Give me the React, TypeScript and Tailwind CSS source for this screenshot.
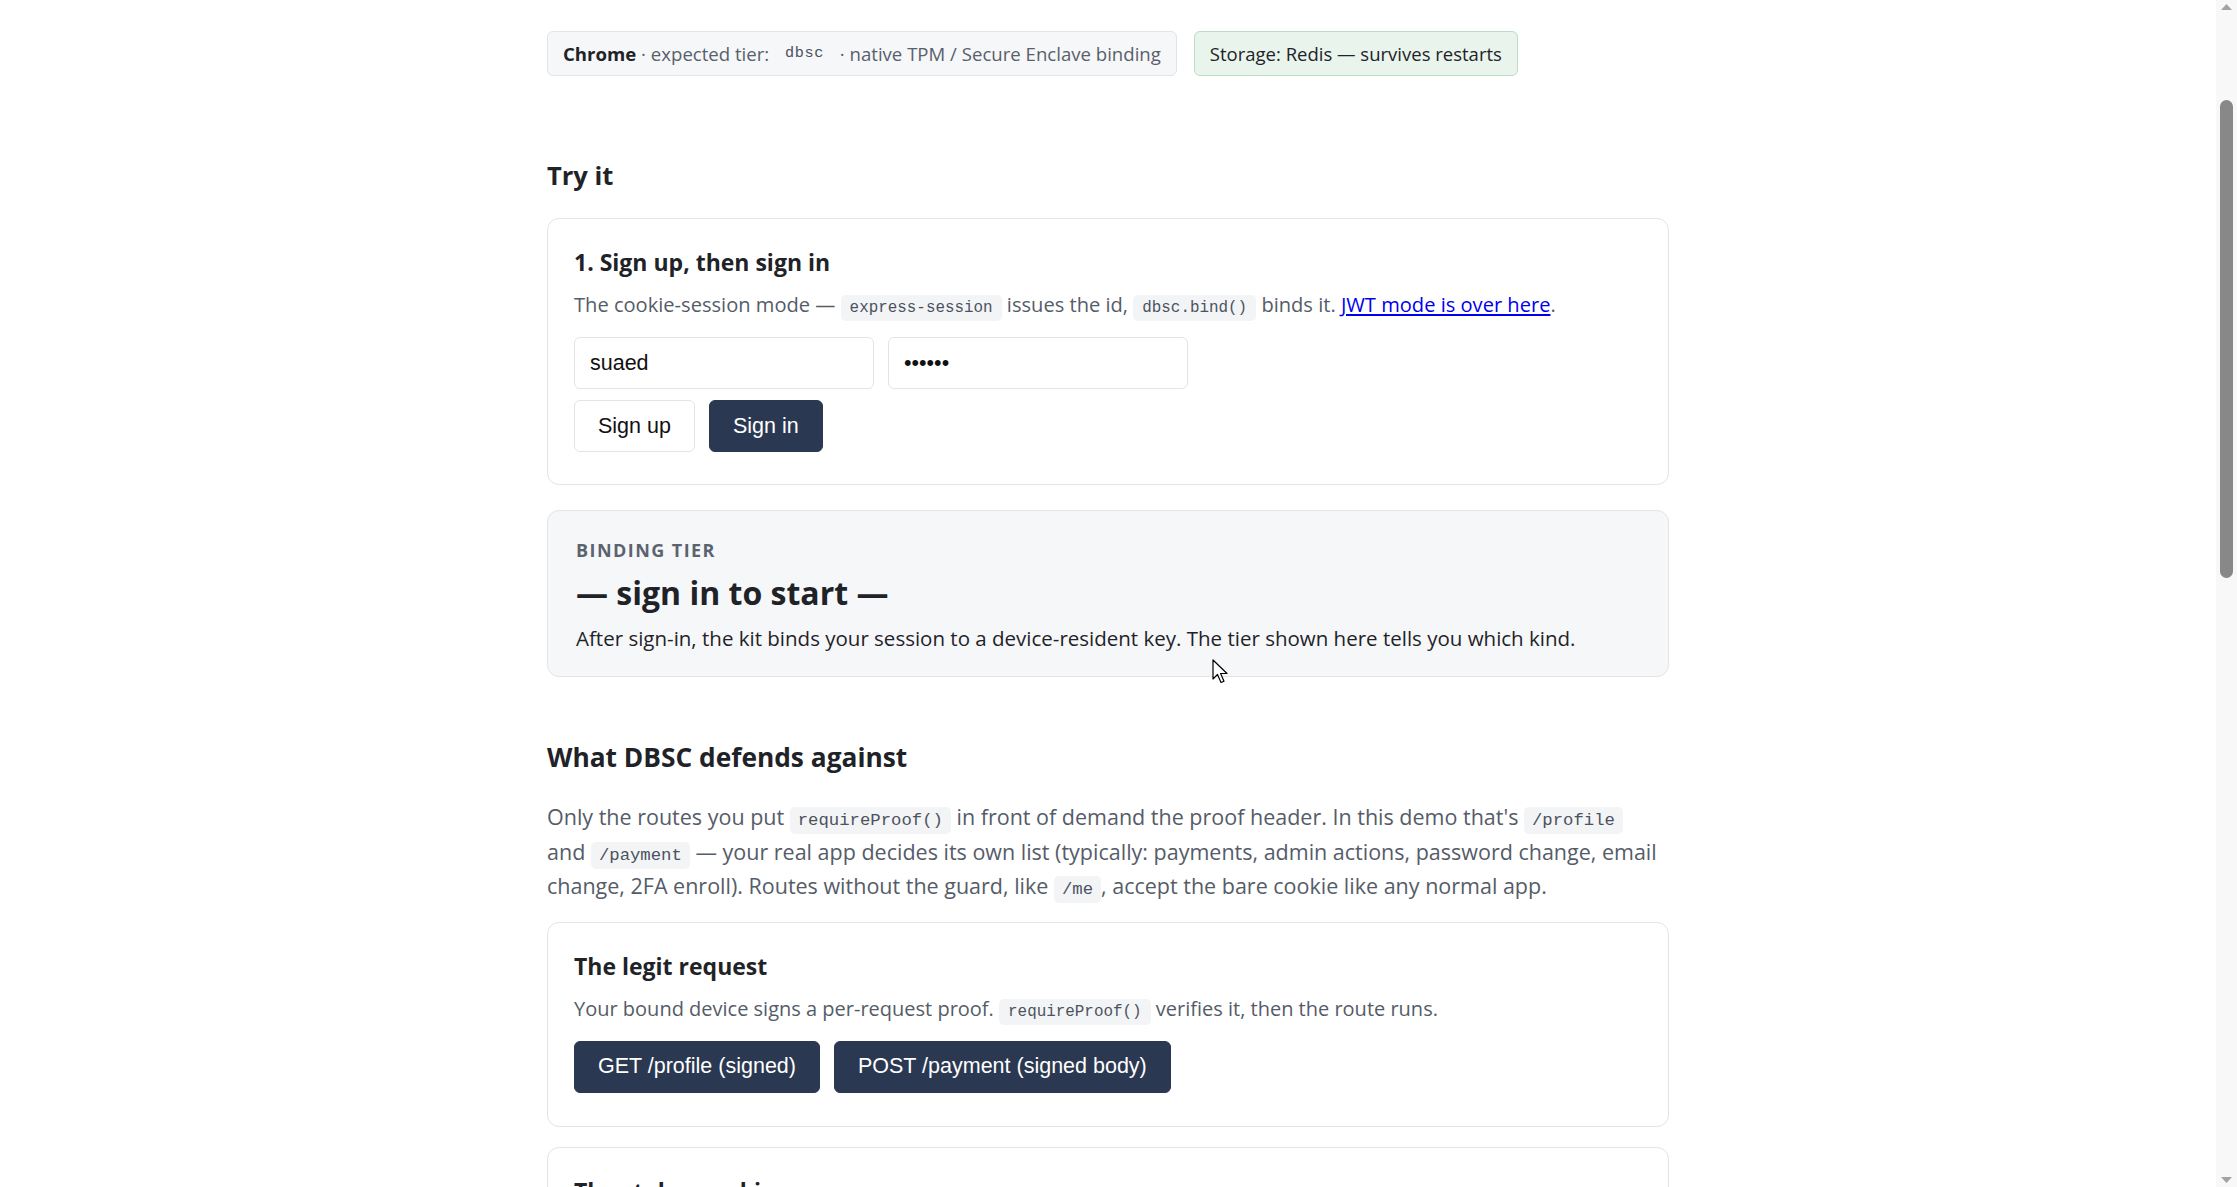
import type { ReactNode } from 'react'

const sans = { fontFamily: '"Open Sans", "Noto Sans", sans-serif' }
const arial = { fontFamily: '"Liberation Sans", Arial, sans-serif' }
const mono = { fontFamily: '"Liberation Mono", "DejaVu Sans Mono", monospace' }

function Code({ children, size = 'md' }: { children: ReactNode; size?: 'sm' | 'md' | 'lg' }) {
  const cls =
    size === 'sm'
      ? 'px-[11px] text-[15.2px] tracking-[0.04em]'
      : size === 'lg'
        ? 'px-[8px] py-[4px] bg-[#f3f4f6] text-[17.3px]'
        : 'px-[9px] py-[4px] bg-[#f3f4f6] text-[15.9px]'
  return (
    <code className={`rounded-[5px] leading-none text-[#4b5260] ${cls}`} style={mono}>
      {children}
    </code>
  )
}

function Card({ children, muted = false, className = '' }: { children: ReactNode; muted?: boolean; className?: string }) {
  return (
    <section
      className={`rounded-[12px] border border-[#e2e4e9] px-[26px] ${muted ? 'bg-[#f6f7f9]' : 'bg-white'} ${className}`}
    >
      {children}
    </section>
  )
}

function Button({ children, dark = false }: { children: ReactNode; dark?: boolean }) {
  return (
    <button
      className={`h-[52px] rounded-[6px] border px-[23px] text-[21.5px] ${
        dark ? 'border-[#2b3852] bg-[#2b3852] text-white' : 'border-[#e2e4e9] bg-white text-[#111]'
      }`}
      style={arial}
    >
      {children}
    </button>
  )
}

export default function App() {
  return (
    <div className="flex h-screen overflow-hidden bg-white" style={sans}>
      <main className="relative flex-1 overflow-hidden">
        <div className="mx-auto w-[1122px] pt-[31px]">
          {/* Environment badges */}
          <div className="flex gap-[17px]">
            <div className="flex h-[45px] items-center whitespace-pre rounded-[6px] border border-[#e1e4e8] bg-[#f6f7f9] px-[15px] text-[18.6px] text-[#59606b]">
              <b className="font-bold text-[#1f2328]">Chrome</b> · expected tier: <Code size="sm">dbsc</Code> · native TPM / Secure Enclave binding
            </div>
            <div className="flex h-[45px] items-center rounded-[6px] border border-[#bcdcc5] bg-[#e8f4ec] px-[15px] text-[18.5px] text-[#1f2328]">
              Storage: Redis — survives restarts
            </div>
          </div>

          <h2 className="mt-[82px] text-[25.5px] font-bold leading-[35px] text-[#1f2328]">Try it</h2>

          {/* Sign in card */}
          <Card className="mt-[25px] pt-[28px] pb-[32px]">
            <h3 className="text-[23px] font-bold leading-[31px] text-[#1f2328]">1. Sign up, then sign in</h3>
            <p className="mt-[10px] text-[20.1px] leading-[34px] text-[#555c68]">
              The cookie-session mode — <Code>express-session</Code> issues the id, <Code>dbsc.bind()</Code> binds it.{' '}
              <a href="#" className="text-[#0000ee] underline">
                JWT mode is over here
              </a>
              .
            </p>
            <div className="mt-[15px] flex gap-[14px]">
              <input
                readOnly
                defaultValue="suaed"
                className="h-[52px] w-[300px] rounded-[6px] border border-[#e2e4e9] bg-white px-[15px] text-[21.5px] text-[#111] outline-none"
                style={arial}
              />
              <input
                readOnly
                type="password"
                defaultValue="secret"
                className="h-[52px] w-[300px] rounded-[6px] border border-[#e2e4e9] bg-white px-[15px] text-[21.5px] text-[#111] outline-none"
                style={arial}
              />
            </div>
            <div className="mt-[11px] flex gap-[14px]">
              <Button>Sign up</Button>
              <Button dark>Sign in</Button>
            </div>
          </Card>

          {/* Binding tier */}
          <Card muted className="mt-[25px] px-[28px] pt-[28px] pb-[23px]">
            <div className="text-[18px] font-bold uppercase leading-[22px] tracking-[0.08em] text-[#5c6370]">Binding tier</div>
            <div className="mt-[12px] text-[32px] font-bold leading-[40px] text-[#1f2328]">— sign in to start —</div>
            <p className="mt-[10px] text-[20.5px] leading-[30px] text-[#1f2328]">
              After sign-in, the kit binds your session to a device-resident key. The tier shown here tells you which kind.
            </p>
          </Card>

          <h2 className="mt-[63px] text-[26.3px] font-bold leading-[35px] text-[#1f2328]">What DBSC defends against</h2>
          <p className="mt-[25px] text-[21.5px] leading-[34.5px] text-[#555c68]">
            Only the routes you put <Code size="lg">requireProof()</Code> in front of demand the proof header. In this demo that's{' '}
            <Code size="lg">/profile</Code> and{'\u00a0'}
            <Code size="lg">/payment</Code> — your real app decides its own list (typically: payments, admin actions, password
            change, email change, 2FA enroll). Routes without the guard, like <Code size="lg">/me</Code>, accept the bare cookie like
            any normal app.
          </p>

          <Card className="mt-[18px] pt-[28px] pb-[33px]">
            <h3 className="text-[23px] font-bold leading-[31px] text-[#1f2328]">The legit request</h3>
            <p className="mt-[10px] text-[20px] leading-[34px] text-[#555c68]">
              Your bound device signs a per-request proof. <Code>requireProof()</Code> verifies it, then the route runs.
            </p>
            <div className="mt-[15px] flex gap-[14px]">
              <Button dark>GET /profile (signed)</Button>
              <Button dark>POST /payment (signed body)</Button>
            </div>
          </Card>

          <Card className="mt-[20px] pt-[28px] pb-[33px]">
            <h3 className="text-[23px] font-bold leading-[31px] text-[#1f2328]">The stolen cookie</h3>
            <p className="mt-[10px] text-[20px] leading-[34px] text-[#555c68]">&nbsp;</p>
          </Card>
        </div>

        {/* mouse pointer */}
        <svg className="absolute left-[1212px] top-[659px]" width="18" height="26" viewBox="0 0 18 26">
          <path d="M1 1 L1 20 L5.5 15.5 L9 23.5 L12 22.2 L8.6 14.5 L15 14.5 Z" fill="white" stroke="black" strokeWidth="1.2" strokeLinejoin="round" />
        </svg>
      </main>

      {/* scrollbar */}
      <div className="flex w-[21px] flex-col items-center bg-[#f8f8f8]">
        <svg className="mt-[4px]" width="11" height="6" viewBox="0 0 11 6">
          <path d="M0 6 L5.5 0 L11 6 Z" fill="#a3a3a3" />
        </svg>
        <div className="mt-[90px] h-[478px] w-[13px] rounded-full bg-[#888888]" />
        <div className="flex-1" />
        <svg className="mb-[4px]" width="11" height="6" viewBox="0 0 11 6">
          <path d="M0 0 L11 0 L5.5 6 Z" fill="#a3a3a3" />
        </svg>
      </div>
    </div>
  )
}
